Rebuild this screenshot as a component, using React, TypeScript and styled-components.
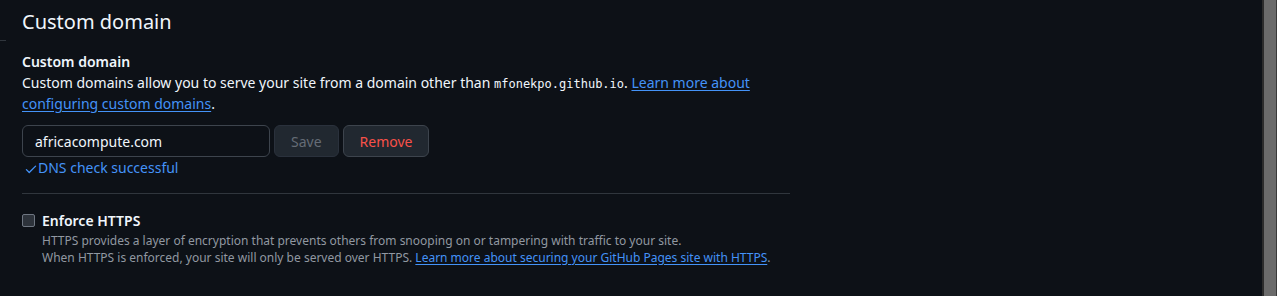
import styled, { createGlobalStyle } from 'styled-components';

const GlobalStyle = createGlobalStyle`
  html, body {
    margin: 0;
    padding: 0;
    background: #0d1117;
  }
  body {
    font-family: 'Noto Sans', 'Liberation Sans', sans-serif;
    color: #f0f6fc;
    font-size: 14px;
    line-height: 1.5;
  }
`;

const Page = styled.div`
  display: flex;
  height: 296px;
  overflow: hidden;
`;
const Main = styled.main`
  flex: 1;
  min-width: 0;
`;
const Scrollbar = styled.div`
  width: 15px;
  flex-shrink: 0;
  background: #6b6b6b;
  border-left: 2px solid #2c2c2c;
  border-right: 1px solid #3a3a3a;
  box-sizing: border-box;
`;
const Subhead = styled.div`
  display: flex;
  align-items: flex-end;
  height: 41px;
  position: relative;
`;
const SubheadRule = styled.span`
  position: absolute;
  left: 0;
  bottom: 0;
  width: 6px;
  height: 1px;
  background: #30363d;
`;
const Title = styled.h2`
  margin: 0 0 4px 22px;
  font-size: 20px;
  font-weight: 400;
  line-height: 30px;
  color: #f0f6fc;
`;
const Section = styled.div`
  width: 768px;
  margin-left: 22px;
`;
const Label = styled.div`
  margin-top: 10px;
  font-weight: 600;
  font-size: 14px;
  line-height: 21px;
`;
const Note = styled.p`
  margin: 0;
  line-height: 21px;
`;
const Code = styled.code`
  font-family: 'DejaVu Sans Mono', 'Liberation Mono', monospace;
  font-size: 12px;
  line-height: 1;
`;
const A = styled.a`
  color: #4493f8;
  text-decoration: underline;
  text-underline-offset: 2px;
`;
const Row = styled.div`
  display: flex;
  gap: 4px;
  margin-top: 11px;
`;
const Input = styled.input`
  box-sizing: border-box;
  width: 248px;
  height: 32px;
  padding: 0 12px;
  background: #0d1117;
  border: 1px solid #3d444d;
  border-radius: 6px;
  color: #f0f6fc;
  font-family: inherit;
  font-size: 14px;
  outline: none;
`;
const Button = styled.button<{ $tone?: 'danger' | 'disabled' }>`
  box-sizing: border-box;
  height: 32px;
  padding: 0 16px;
  background: #212830;
  border: 1px solid #3d444d;
  border-radius: 6px;
  font-family: inherit;
  font-size: 14px;
  font-weight: 400;
  color: ${(p) => (p.$tone === 'danger' ? '#f85149' : p.$tone === 'disabled' ? '#656c76' : '#f0f6fc')};
  border-color: ${(p) => (p.$tone === 'disabled' ? '#2a313c' : '#3d444d')};
`;
const Status = styled.div`
  display: flex;
  align-items: center;
  margin-top: 0;
  color: #4493f8;
  line-height: 21px;
  svg {
    margin: 2px 0 0 2px;
  }
`;
const Divider = styled.hr`
  margin: 15px 0 0;
  border: 0;
  border-top: 1px solid #30363d;
`;
const CheckRow = styled.div`
  display: flex;
  gap: 7px;
  margin-top: 16px;
`;
const Box = styled.span`
  box-sizing: border-box;
  width: 13px;
  height: 13px;
  margin-top: 4px;
  border: 1px solid #6e7681;
  border-radius: 2px;
  background: #2d333b;
  flex-shrink: 0;
`;
const CheckLabel = styled.div`
  font-weight: 600;
  line-height: 21px;
  margin-bottom: 1px;
`;
const Help = styled.p`
  margin: 0;
  font-size: 12px;
  line-height: 17px;
  color: #9198a1;
`;

function Check() {
  return (
    <svg width="14" height="14" viewBox="0 0 16 16" fill="#4493f8">
      <path d="M13.78 4.22a.75.75 0 0 1 0 1.06l-7.25 7.25a.75.75 0 0 1-1.06 0L2.22 9.28a.751.751 0 0 1 .018-1.042.751.751 0 0 1 1.042-.018L6 10.94l6.72-6.72a.75.75 0 0 1 1.06 0Z" />
    </svg>
  );
}

export default function App() {
  return (
    <>
      <GlobalStyle />
      <Page>
        <Main>
          <Subhead>
            <Title>Custom domain</Title>
            <SubheadRule />
          </Subhead>
          <Section>
            <Label>Custom domain</Label>
            <Note>
              Custom domains allow you to serve your site from a domain other than <Code>mfonekpo.github.io</Code>.{' '}
              <A href="#">Learn more about configuring custom domains</A>.
            </Note>
            <Row>
              <Input defaultValue="africacompute.com" />
              <Button $tone="disabled" disabled>Save</Button>
              <Button $tone="danger">Remove</Button>
            </Row>
            <Status>
              <Check />
              DNS check successful
            </Status>
            <Divider />
            <CheckRow>
              <Box />
              <div>
                <CheckLabel>Enforce HTTPS</CheckLabel>
                <Help>HTTPS provides a layer of encryption that prevents others from snooping on or tampering with traffic to your site.</Help>
                <Help>
                  When HTTPS is enforced, your site will only be served over HTTPS.{' '}
                  <A href="#">Learn more about securing your GitHub Pages site with HTTPS</A>.
                </Help>
              </div>
            </CheckRow>
          </Section>
        </Main>
        <Scrollbar />
      </Page>
    </>
  );
}
